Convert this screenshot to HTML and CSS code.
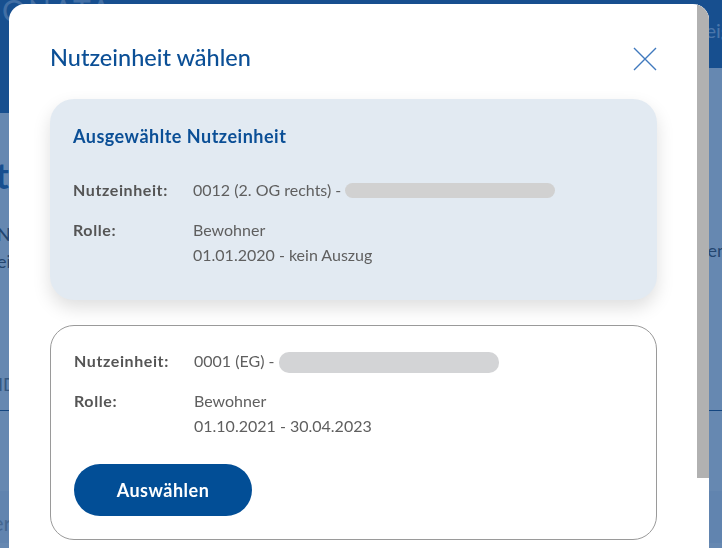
FILE: index.html
```html
<!DOCTYPE html>
<html lang="de">
<head>
<meta charset="UTF-8">
<meta name="viewport" content="width=device-width, initial-scale=1.0">
<title>Nutzeinheit wählen</title>
<link rel="stylesheet" href="styles.css">
</head>
<body>

<!-- page behind the dialog -->
<div class="site">
    <div class="site-header">
        <div class="brand">ONATA</div>
        <div class="topbar">
            <span class="topbar-link">Anzeigen</span>
        </div>
    </div>
    <div class="site-main">
        <div class="main-left">
            <h1 class="page-title">Nutzeinheit</h1>
            <p class="page-text">Nutzeinheit<br>eine</p>
            <div class="page-label">ID</div>
        </div>
        <div class="main-right">
            <p class="page-text">Konten</p>
        </div>
    </div>
    <div class="site-rule"></div>
    <div class="site-footer">
        <span class="footer-text">er</span>
    </div>
</div>

<div class="backdrop"></div>

<div class="modal">
    <div class="modal-body">
        <div class="modal-head">
            <h2 class="modal-title">Nutzeinheit wählen</h2>
            <button class="close-button" aria-label="Schließen">
                <svg width="24" height="24" viewBox="0 0 24 24">
                    <path d="M1 1 L23 23 M23 1 L1 23" stroke="#4079be" stroke-width="1.4" fill="none"/>
                </svg>
            </button>
        </div>

        <div class="unit-card selected">
            <h3 class="unit-heading">Ausgewählte Nutzeinheit</h3>
            <div class="unit-row">
                <div class="unit-label">Nutzeinheit:</div>
                <div class="unit-value">0012 (2. OG rechts) - <span class="redacted"></span></div>
            </div>
            <div class="unit-row">
                <div class="unit-label">Rolle:</div>
                <div class="unit-value">Bewohner<br>01.01.2020 - kein Auszug</div>
            </div>
        </div>

        <div class="unit-card">
            <div class="unit-row">
                <div class="unit-label">Nutzeinheit:</div>
                <div class="unit-value">0001 (EG) - <span class="redacted wide"></span></div>
            </div>
            <div class="unit-row">
                <div class="unit-label">Rolle:</div>
                <div class="unit-value">Bewohner<br>01.10.2021 - 30.04.2023</div>
            </div>
            <button class="select-button">Auswählen</button>
        </div>
    </div>
    <!-- scrollbar of the dialog -->
    <div class="modal-scroll">
        <div class="modal-thumb"></div>
    </div>
</div>

</body>
</html>
```

FILE: styles.css
```css
body {
    margin: 0;
    font-family: Lato, "Open Sans", sans-serif;
    background-color: #ffffff;
    overflow: hidden;
}

/* background page */
.site {
    min-height: 100vh;
    background-color: #ffffff;
}

.site-header {
    display: flex;
    align-items: flex-start;
}

.brand {
    width: 240px;
    height: 113px;
    background-color: #0b4f96;
    color: #8fb2da;
    font-size: 30px;
    line-height: 20px;
    letter-spacing: 2px;
    padding-left: 2px;
    box-sizing: border-box;
}

.topbar {
    flex: 1;
    height: 68px;
    background-color: #0b4f96;
    padding: 18px 0 0 432px;
    box-sizing: border-box;
    white-space: nowrap;
    overflow: hidden;
}

.topbar-link {
    color: #a9c6e8;
    font-size: 20px;
}

.site-main {
    display: flex;
    justify-content: space-between;
    height: 297px;
}

.main-left {
    width: 9px;
    display: flex;
    flex-direction: column;
    align-items: flex-end;
    padding-top: 40px;
}

.page-title {
    margin: 0;
    font-size: 36px;
    line-height: 44px;
    color: #0b4f96;
    white-space: nowrap;
}

.page-text {
    align-self: flex-start;
    margin: 24px 0 0 -3px;
    font-size: 18px;
    line-height: 27px;
    color: #333333;
    white-space: nowrap;
}

.page-label {
    align-self: flex-start;
    margin: 98px 0 0 -2px;
    color: #666666;
    font-size: 18px;
}

.main-right .page-text {
    margin: 124px -5px 0 0;
}

.site-rule {
    height: 1px;
    background-color: #003366;
}

.site-footer {
    margin-top: 80px;
    height: 52px;
    background-color: #f0f3f7;
    padding-top: 18px;
    box-sizing: border-box;
}

.footer-text {
    margin-left: -8px;
    color: #999999;
    font-size: 22px;
}

.backdrop {
    position: fixed;
    inset: 0;
    background-color: rgba(30, 80, 140, 0.68);
}

/* dialog */
.modal {
    position: fixed;
    left: 9px;
    top: 4px;
    width: 700px;
    height: 580px;
    display: flex;
    background-color: #ffffff;
    border-radius: 16px;
    overflow: hidden;
}

.modal-body {
    flex: 1;
    padding: 38px 40px 0 41px;
}

.modal-scroll {
    width: 12px;
    background-color: #ffffff;
}

.modal-thumb {
    height: 474px;
    background-color: #b1b1b1;
}

.modal-head {
    display: flex;
    justify-content: space-between;
    align-items: flex-start;
    margin-bottom: 27px;
}

.modal-title {
    margin: 0;
    font-size: 23.5px;
    line-height: 30px;
    font-weight: 500;
    color: #0b4f96;
}

.close-button {
    margin-top: 5px;
    padding: 0;
    border: none;
    background: none;
    width: 24px;
    height: 24px;
    cursor: pointer;
}

.unit-card {
    border: 1px solid #9a9a9a;
    border-radius: 24px;
    padding: 22px 23px 23px 23px;
    background-color: #ffffff;
}

.unit-card.selected {
    border: none;
    background-color: #e2eaf2;
    padding: 25px 23px 33px 23px;
    margin-bottom: 25px;
    box-shadow: 0 8px 18px rgba(0, 0, 0, 0.13);
}

.unit-heading {
    margin: 0 0 29px 0;
    font-size: 18px;
    line-height: 24px;
    font-weight: 700;
    letter-spacing: 0.5px;
    color: #0b4f96;
}

.unit-row {
    display: flex;
    font-size: 16px;
    line-height: 25px;
    margin-bottom: 15px;
}

.unit-row:last-of-type {
    margin-bottom: 0;
}

.unit-label {
    width: 120px;
    flex-shrink: 0;
    font-weight: 700;
    letter-spacing: 0.6px;
    color: #555555;
}

.unit-value {
    color: #5f5f5f;
}

.redacted {
    display: inline-block;
    width: 210px;
    height: 15px;
    border-radius: 8px;
    background-color: #d1d1d1;
    vertical-align: -2px;
}

.redacted.wide {
    width: 220px;
    height: 21px;
    border-radius: 10px;
    background-color: #d3d4d6;
    vertical-align: -6px;
}

.select-button {
    display: block;
    margin-top: 26px;
    width: 178px;
    height: 52px;
    border: none;
    border-radius: 26px;
    background-color: #024e96;
    color: #ffffff;
    font-family: Lato, "Open Sans", sans-serif;
    font-size: 18px;
    font-weight: 700;
    letter-spacing: 0.5px;
    cursor: pointer;
}
```
